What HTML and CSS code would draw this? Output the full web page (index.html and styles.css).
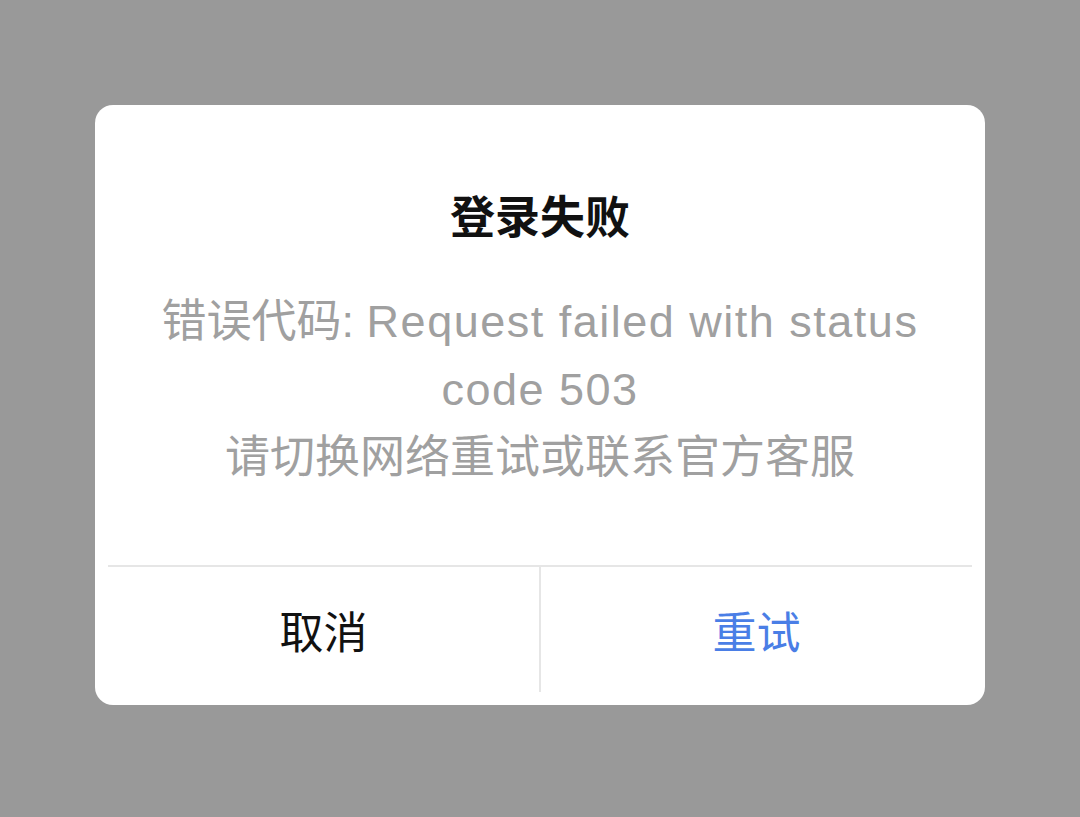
FILE: index.html
```html
<!DOCTYPE html>
<html lang="zh-CN">
<head>
<meta charset="utf-8">
<link rel="stylesheet" href="styles.css">
</head>
<body>
<div class="overlay">
  <div class="dialog">
    <div class="content">
      <div class="title">登录失败</div>
      <div class="message">错误代码: <span class="latin">Request failed with status</span><br><span class="latin">code 503</span><br>请切换网络重试或联系官方客服</div>
    </div>
    <div class="actions">
      <div class="btn cancel">取消</div>
      <div class="sep"></div>
      <div class="btn retry">重试</div>
    </div>
  </div>
</div>
</body>
</html>
```
FILE: styles.css
```css
html, body {
  margin: 0;
  padding: 0;
}
body {
  width: 1080px;
  height: 817px;
  background: #999999;
  font-family: "Liberation Sans", "Noto Sans CJK SC", sans-serif;
  overflow: hidden;
}
.overlay {
  display: flex;
  justify-content: center;
  padding-top: 105px;
}
.dialog {
  width: 890px;
  height: 600px;
  background: #ffffff;
  border-radius: 18px;
  display: flex;
  flex-direction: column;
  padding: 0 13px;
  box-sizing: border-box;
}
.content {
  height: 462px;
  box-sizing: border-box;
  padding-top: 80px;
  border-bottom: 2px solid #e6e6e6;
  text-align: center;
}
.title {
  font-family: "Noto Sans CJK SC", sans-serif;
  font-weight: 700;
  font-size: 45px;
  line-height: 60px;
  color: #111111;
}
.message {
  margin-top: 43px;
  font-size: 45px;
  line-height: 68px;
  color: #a0a0a0;
}
.latin {
  letter-spacing: 1.5px;
}
.actions {
  display: flex;
  height: 125px;
}
.btn {
  flex: 1;
  display: flex;
  align-items: center;
  justify-content: center;
  font-family: "Noto Sans CJK SC", sans-serif;
  font-size: 44px;
}
.cancel {
  color: #111111;
}
.retry {
  color: #4a7ee6;
}
.sep {
  width: 2px;
  background: #e6e6e6;
}
```
